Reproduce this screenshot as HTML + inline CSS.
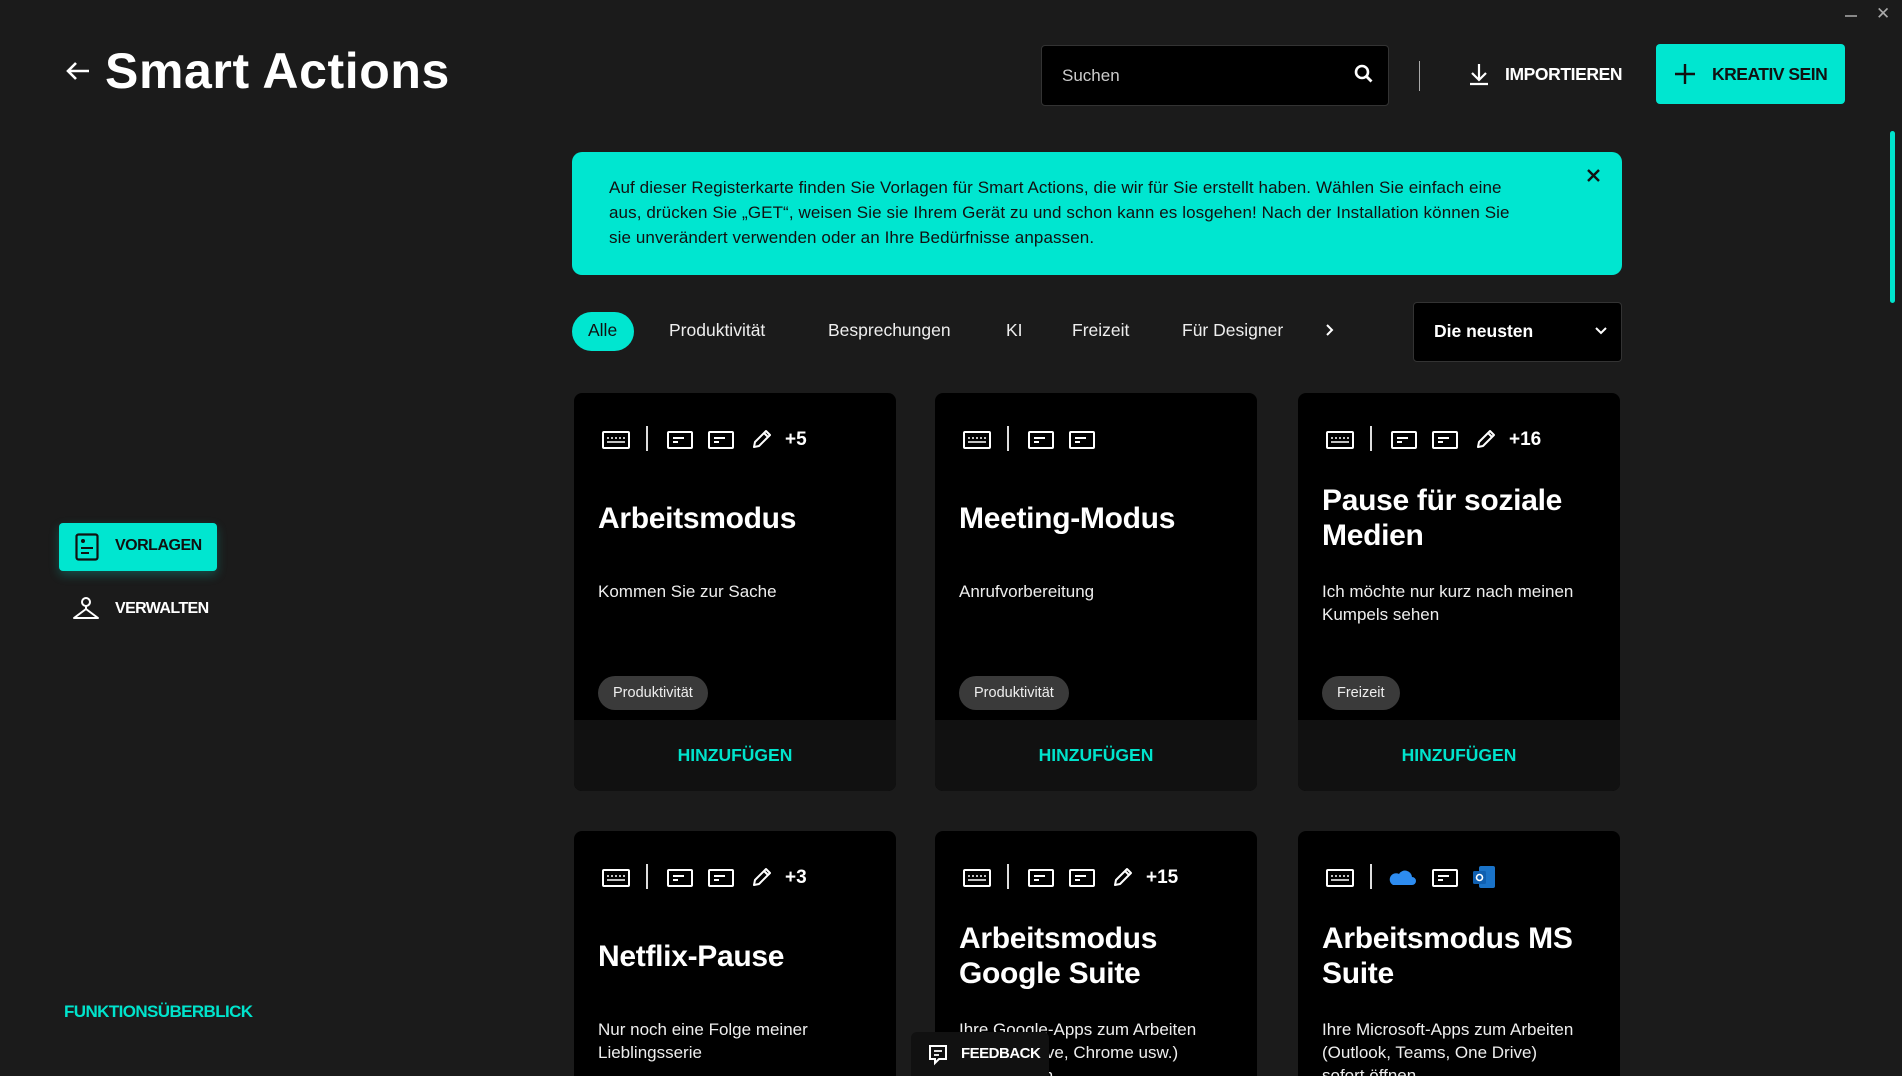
<!DOCTYPE html>
<html style="width:1902px;height:1076px;overflow:hidden"><head><meta charset="utf-8"><style>
*{margin:0;padding:0;box-sizing:border-box}
html,body{width:1902px;height:1076px;overflow:hidden}
body{background:#1b1b1b;font-family:"Liberation Sans",sans-serif;color:#fff;position:relative}
.a{position:absolute}
.card{position:absolute;width:322px;height:398px;background:#000;border-radius:8px;overflow:hidden}
.card.r2{height:245px;border-radius:8px 8px 0 0}
.card .ic{position:absolute;left:0;top:0;width:322px;height:60px}
.card .tt{position:absolute;left:24px;top:90px;width:285px;height:70px;display:flex;align-items:center;font-weight:bold;font-size:30px;line-height:35px;letter-spacing:-.3px}
.card .ds{position:absolute;left:24px;top:187px;width:262px;font-size:17px;line-height:23px;color:#eee}
.card .pl{position:absolute;left:24px;top:283px;height:34px;padding:0 15px;border-radius:17px;background:#3a3a3a;font-size:14.5px;line-height:34px;color:#eee}
.card .ft{position:absolute;left:0;top:327px;width:322px;height:71px;background:#111;color:#00e3cc;font-weight:bold;font-size:17.5px;text-align:center;line-height:71px}
.tab{position:absolute;top:318px;font-size:17.5px;line-height:24px;color:#eee}
</style></head><body>
<svg width="0" height="0" style="position:absolute"><defs>
<symbol id="kb" viewBox="0 0 28 18"><rect x="1" y="1" width="26" height="16" rx="1" fill="none" stroke="#fff" stroke-width="2"/><path d="M5 7h2M9 7h2M13 7h2M17 7h2M21 7h2M5 11h18" stroke="#fff" stroke-width="1.6"/></symbol>
<symbol id="dc" viewBox="0 0 26 18"><rect x="1" y="1" width="24" height="16" rx="1" fill="none" stroke="#fff" stroke-width="2"/><path d="M6 7h11M6 11h5" stroke="#fff" stroke-width="2"/></symbol>
<symbol id="pn" viewBox="0 0 22 22"><path d="M3 19l1-5L15 3l4 4L8 18z M13 5l4 4" fill="none" stroke="#fff" stroke-width="2" stroke-linejoin="round"/></symbol>
</defs></svg>

<div class="a" style="left:1845px;top:15px;width:12px;height:2px;background:#888"></div>
<div class="a" style="left:1876px;top:4px;font-size:17px;color:#aaa">✕</div>
<div class="a" style="left:1890px;top:131px;width:5px;height:172px;border-radius:3px;background:#00e3cc"></div>

<svg class="a" style="left:64px;top:60px" width="28" height="22" viewBox="0 0 28 22"><path d="M25 11H4M12 3L4 11l8 8" fill="none" stroke="#fff" stroke-width="2.6"/></svg>
<div class="a" style="left:105px;top:41px;font-size:50px;font-weight:bold;letter-spacing:.6px;line-height:60px">Smart Actions</div>

<div class="a" style="left:1041px;top:45px;width:348px;height:61px;background:#000;border:1px solid #333;border-radius:4px"></div>
<div class="a" style="left:1062px;top:66px;font-size:17px;color:#ccc">Suchen</div>
<svg class="a" style="left:1354px;top:64px" width="20" height="22" viewBox="0 0 20 22"><circle cx="8" cy="8" r="6" fill="none" stroke="#fff" stroke-width="2.6"/><path d="M12.5 12.5l5 5" stroke="#fff" stroke-width="2.8"/></svg>
<div class="a" style="left:1419px;top:61px;width:1px;height:30px;background:#aaa"></div>
<svg class="a" style="left:1468px;top:62px" width="22" height="24" viewBox="0 0 22 24"><path d="M11 2v15M4 11l7 7 7-7M2 22h18" fill="none" stroke="#fff" stroke-width="2.2"/></svg>
<div class="a" style="left:1505px;top:64px;font-size:17.5px;font-weight:bold;letter-spacing:-.4px">IMPORTIEREN</div>
<div class="a" style="left:1656px;top:44px;width:189px;height:60px;background:#00e6d0;border-radius:4px"></div>
<svg class="a" style="left:1674px;top:63px" width="22" height="22" viewBox="0 0 22 22"><path d="M11 1v20M1 11h20" stroke="#111" stroke-width="2.4"/></svg>
<div class="a" style="left:1712px;top:64px;font-size:17.5px;font-weight:bold;color:#111;letter-spacing:-.5px">KREATIV SEIN</div>

<div class="a" style="left:59px;top:523px;width:158px;height:48px;background:#00e6d0;border-radius:4px;box-shadow:0 4px 10px rgba(0,230,208,.25)"></div>
<svg class="a" style="left:75px;top:533px" width="24" height="28" viewBox="0 0 24 28"><rect x="1.5" y="1.5" width="21" height="25" rx="2" fill="none" stroke="#111" stroke-width="2.2"/><circle cx="8" cy="8" r="2" fill="#111"/><path d="M6 15h12M6 20h8" stroke="#111" stroke-width="2"/></svg>
<div class="a" style="left:115px;top:537px;font-size:16px;font-weight:bold;color:#111;letter-spacing:-.5px">VORLAGEN</div>
<svg class="a" style="left:72px;top:596px" width="28" height="26" viewBox="0 0 28 26"><circle cx="14" cy="6" r="4" fill="none" stroke="#fff" stroke-width="2"/><path d="M14 10v3L2 22h24L14 13" fill="none" stroke="#fff" stroke-width="2" stroke-linejoin="round"/></svg>
<div class="a" style="left:115px;top:600px;font-size:16px;font-weight:bold;letter-spacing:-.6px">VERWALTEN</div>
<div class="a" style="left:64px;top:1002px;font-size:17px;font-weight:bold;color:#00e3cc;letter-spacing:-.6px">FUNKTIONSÜBERBLICK</div>

<div class="a" style="left:572px;top:152px;width:1050px;height:123px;background:#00e6d0;border-radius:10px"></div>
<div class="a" style="left:609px;top:175px;width:1000px;font-size:17px;line-height:25px;color:#111;white-space:nowrap;letter-spacing:.1px">Auf dieser Registerkarte finden Sie Vorlagen für Smart Actions, die wir für Sie erstellt haben. Wählen Sie einfach eine<br>aus, drücken Sie „GET“, weisen Sie sie Ihrem Gerät zu und schon kann es losgehen! Nach der Installation können Sie<br>sie unverändert verwenden oder an Ihre Bedürfnisse anpassen.</div>
<svg class="a" style="left:1587px;top:169px" width="13" height="13" viewBox="0 0 13 13"><path d="M1 1l11 11M12 1L1 12" stroke="#111" stroke-width="2.4"/></svg>

<div class="a" style="left:572px;top:312px;width:62px;height:39px;border-radius:20px;background:#00e6d0"></div>
<div class="tab" style="left:588px;color:#111">Alle</div>
<div class="tab" style="left:669px">Produktivität</div>
<div class="tab" style="left:828px">Besprechungen</div>
<div class="tab" style="left:1006px">KI</div>
<div class="tab" style="left:1072px">Freizeit</div>
<div class="tab" style="left:1182px">Für Designer</div>
<svg class="a" style="left:1325px;top:323px" width="10" height="14" viewBox="0 0 10 14"><path d="M2 2l5 5-5 5" fill="none" stroke="#fff" stroke-width="2"/></svg>
<div class="a" style="left:1413px;top:302px;width:209px;height:60px;background:#000;border:1px solid #333;border-radius:4px"></div>
<div class="a" style="left:1434px;top:321px;font-size:17.5px;font-weight:bold">Die neusten</div>
<svg class="a" style="left:1595px;top:327px" width="12" height="8" viewBox="0 0 12 8"><path d="M1 1l5 5 5-5" fill="none" stroke="#fff" stroke-width="2"/></svg>

<div class="card" style="left:574px;top:393px">
<div class="ic"><svg class="a" style="left:28px;top:38px" width="28" height="18"><use href="#kb"/></svg><div class="a" style="left:72px;top:33px;width:2px;height:25px;background:#ddd"></div><svg class="a" style="left:93px;top:38px" width="26" height="18"><use href="#dc"/></svg><svg class="a" style="left:134px;top:38px" width="26" height="18"><use href="#dc"/></svg><svg class="a" style="left:177px;top:35px" width="22" height="22"><use href="#pn"/></svg><div class="a" style="left:211px;top:36px;font-weight:bold;font-size:19px">+5</div></div>
<div class="tt">Arbeitsmodus</div><div class="ds">Kommen Sie zur Sache</div><div class="pl">Produktivität</div><div class="ft">HINZUFÜGEN</div></div>

<div class="card" style="left:935px;top:393px">
<div class="ic"><svg class="a" style="left:28px;top:38px" width="28" height="18"><use href="#kb"/></svg><div class="a" style="left:72px;top:33px;width:2px;height:25px;background:#ddd"></div><svg class="a" style="left:93px;top:38px" width="26" height="18"><use href="#dc"/></svg><svg class="a" style="left:134px;top:38px" width="26" height="18"><use href="#dc"/></svg></div>
<div class="tt">Meeting-Modus</div><div class="ds">Anrufvorbereitung</div><div class="pl">Produktivität</div><div class="ft">HINZUFÜGEN</div></div>

<div class="card" style="left:1298px;top:393px">
<div class="ic"><svg class="a" style="left:28px;top:38px" width="28" height="18"><use href="#kb"/></svg><div class="a" style="left:72px;top:33px;width:2px;height:25px;background:#ddd"></div><svg class="a" style="left:93px;top:38px" width="26" height="18"><use href="#dc"/></svg><svg class="a" style="left:134px;top:38px" width="26" height="18"><use href="#dc"/></svg><svg class="a" style="left:177px;top:35px" width="22" height="22"><use href="#pn"/></svg><div class="a" style="left:211px;top:36px;font-weight:bold;font-size:19px">+16</div></div>
<div class="tt">Pause für soziale Medien</div><div class="ds">Ich möchte nur kurz nach meinen Kumpels sehen</div><div class="pl">Freizeit</div><div class="ft">HINZUFÜGEN</div></div>

<div class="card r2" style="left:574px;top:831px">
<div class="ic"><svg class="a" style="left:28px;top:38px" width="28" height="18"><use href="#kb"/></svg><div class="a" style="left:72px;top:33px;width:2px;height:25px;background:#ddd"></div><svg class="a" style="left:93px;top:38px" width="26" height="18"><use href="#dc"/></svg><svg class="a" style="left:134px;top:38px" width="26" height="18"><use href="#dc"/></svg><svg class="a" style="left:177px;top:35px" width="22" height="22"><use href="#pn"/></svg><div class="a" style="left:211px;top:36px;font-weight:bold;font-size:19px">+3</div></div>
<div class="tt">Netflix-Pause</div><div class="ds">Nur noch eine Folge meiner Lieblingsserie</div></div>

<div class="card r2" style="left:935px;top:831px">
<div class="ic"><svg class="a" style="left:28px;top:38px" width="28" height="18"><use href="#kb"/></svg><div class="a" style="left:72px;top:33px;width:2px;height:25px;background:#ddd"></div><svg class="a" style="left:93px;top:38px" width="26" height="18"><use href="#dc"/></svg><svg class="a" style="left:134px;top:38px" width="26" height="18"><use href="#dc"/></svg><svg class="a" style="left:177px;top:35px" width="22" height="22"><use href="#pn"/></svg><div class="a" style="left:211px;top:36px;font-weight:bold;font-size:19px">+15</div></div>
<div class="tt">Arbeitsmodus Google Suite</div><div class="ds">Ihre Google-Apps zum Arbeiten (Google Drive, Chrome usw.) sofort öffnen</div></div>

<div class="card r2" style="left:1298px;top:831px">
<div class="ic"><svg class="a" style="left:28px;top:38px" width="28" height="18"><use href="#kb"/></svg><div class="a" style="left:72px;top:33px;width:2px;height:25px;background:#ddd"></div>
<svg class="a" style="left:91px;top:37px" width="27" height="18" viewBox="0 0 27 18"><path d="M4 17h19a4 4 0 0 0 0-8 7 7 0 0 0-13-3 5 5 0 0 0-6 11z" fill="#2d8cf0"/></svg>
<svg class="a" style="left:134px;top:38px" width="26" height="18"><use href="#dc"/></svg>
<svg class="a" style="left:174px;top:34px" width="24" height="24" viewBox="0 0 24 24"><rect x="7" y="1" width="16" height="22" rx="2" fill="#1a73c8"/><rect x="1" y="6" width="13" height="13" rx="1.5" fill="#0f5fb0"/><circle cx="7.5" cy="12.5" r="3" fill="none" stroke="#fff" stroke-width="1.6"/></svg></div>
<div class="tt">Arbeitsmodus MS Suite</div><div class="ds">Ihre Microsoft-Apps zum Arbeiten (Outlook, Teams, One Drive) sofort öffnen</div></div>

<div class="a" style="left:911px;top:1032px;width:138px;height:44px;background:#111;border-radius:6px 6px 0 0"></div>
<svg class="a" style="left:928px;top:1044px" width="20" height="22" viewBox="0 0 20 22"><path d="M2 2h16v13H11l-4 4v-4H2z" fill="none" stroke="#fff" stroke-width="2"/><path d="M6 7h8M6 11h5" stroke="#fff" stroke-width="1.8"/></svg>
<div class="a" style="left:961px;top:1045px;font-size:15px;font-weight:bold;letter-spacing:-.5px">FEEDBACK</div>
</body></html>
